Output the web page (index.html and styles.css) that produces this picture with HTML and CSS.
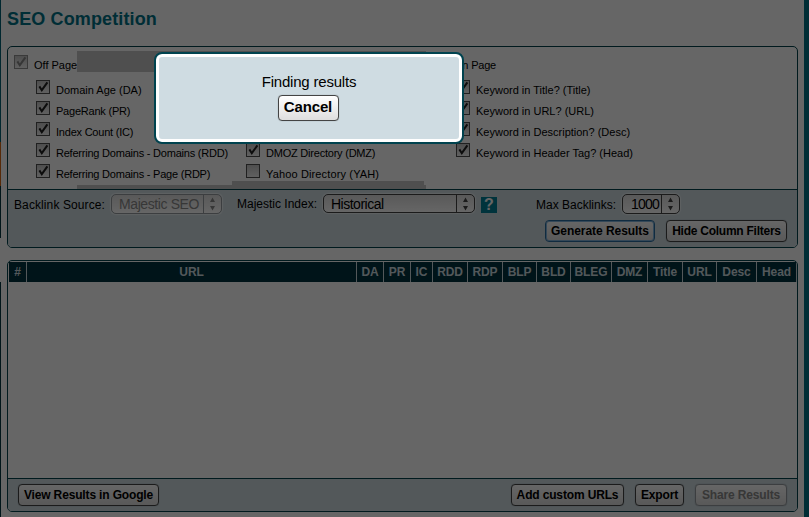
FILE: index.html
```html
<!DOCTYPE html>
<html lang="en">
<head>
    <meta charset="UTF-8">
    <meta name="viewport" content="width=device-width, initial-scale=1.0">
    <title>SEO Competition</title>
    <link rel="stylesheet" href="styles.css">
</head>
<body>
    <svg class="defs" width="0" height="0">
        <symbol id="tick" viewBox="0 0 14 14"><path d="M3.4 6.4 L5.8 10.2 L11.4 2.4" fill="none" stroke="currentColor" stroke-width="2"/></symbol>
        <symbol id="arrows" viewBox="0 0 7 14"><path d="M3.5 0.5 L6 5 H1 Z M3.5 13.5 L6 9 H1 Z" fill="currentColor"/></symbol>
    </svg>
    <div class="page">
        <div class="rail"><i class="teal"></i><i class="orange"></i><i class="dark"></i><i class="gap"></i><i class="dark low"></i></div>
        <main>
            <h1>SEO Competition</h1>
            <section class="panel filters">
                <div class="columns">
                    <div class="col first">
                        <label class="head off"><span class="box"><svg><use href="#tick"/></svg></span>Off Page</label>
                        <label><span class="box"><svg><use href="#tick"/></svg></span>Domain Age (DA)</label>
                        <label class="tight"><span class="box"><svg><use href="#tick"/></svg></span>PageRank (PR)</label>
                        <label class="tight"><span class="box"><svg><use href="#tick"/></svg></span>Index Count (IC)</label>
                        <label class="tight"><span class="box"><svg><use href="#tick"/></svg></span>Referring Domains - Domains (RDD)</label>
                        <label class="tight"><span class="box"><svg><use href="#tick"/></svg></span>Referring Domains - Page (RDP)</label>
                    </div>
                    <div class="col second">
                        <label class="tight"><span class="box"><svg><use href="#tick"/></svg></span>DMOZ Directory (DMZ)</label>
                        <label class="loose"><span class="box"></span>Yahoo Directory (YAH)</label>
                    </div>
                    <div class="col third">
                        <label class="head"><span class="box"><svg><use href="#tick"/></svg></span><span class="onpage">On Page</span></label>
                        <label><span class="box"><svg><use href="#tick"/></svg></span>Keyword in Title? (Title)</label>
                        <label><span class="box"><svg><use href="#tick"/></svg></span>Keyword in URL? (URL)</label>
                        <label><span class="box"><svg><use href="#tick"/></svg></span>Keyword in Description? (Desc)</label>
                        <label><span class="box"><svg><use href="#tick"/></svg></span>Keyword in Header Tag? (Head)</label>
                    </div>
                    <div class="patch top"></div>
                    <div class="patch bottom"></div>
                    <div class="patch bottom-right"></div>
                </div>
                <div class="options">
                    <div class="selects">
                        <span class="name source">Backlink Source:</span>
                        <div class="select disabled majestic"><span>Majestic SEO</span><svg><use href="#arrows"/></svg></div>
                        <span class="name index">Majestic Index:</span>
                        <div class="select historical"><span>Historical</span><svg><use href="#arrows"/></svg></div>
                        <span class="help">?</span>
                        <span class="name max">Max Backlinks:</span>
                        <div class="select count"><span>1000</span><svg><use href="#arrows"/></svg></div>
                    </div>
                    <div class="buttons">
                        <button class="focus generate">Generate Results</button>
                        <button class="hide">Hide Column Filters</button>
                    </div>
                </div>
            </section>
            <section class="panel results">
                <div class="thead">
                    <span>#</span><span>URL</span><span>DA</span><span>PR</span><span>IC</span><span>RDD</span><span>RDP</span><span>BLP</span><span>BLD</span><span>BLEG</span><span>DMZ</span><span>Title</span><span>URL</span><span>Desc</span><span>Head</span>
                </div>
                <div class="rows"></div>
                <div class="footer">
                    <button class="view">View Results in Google</button>
                    <button class="custom">Add custom URLs</button>
                    <button class="export">Export</button>
                    <button class="share" disabled>Share Results</button>
                </div>
            </section>
        </main>
        <div class="edge"></div>
    </div>
    <div class="overlay"></div>
    <div class="modal">
        <p>Finding results</p>
        <button class="cancel">Cancel</button>
    </div>
</body>
</html>
```
FILE: styles.css
```css
*{
    box-sizing: border-box;
}
body{
    margin: 0;
    width: 809px;
    height: 517px;
    overflow: hidden;
    background-color: #fff;
    color: #000;
    font-family: "Liberation Sans", Arial, sans-serif;
    font-size: 11px;
}
.defs{
    position: absolute;
}
.page{
    display: flex;
    height: 517px;
}
.rail{
    width: 1px;
    display: flex;
    flex-direction: column;
}
.rail .teal{
    height: 142px;
    background-color: #006277;
}
.rail .orange{
    height: 44px;
    background-color: #d86a16;
}
.rail .dark{
    height: 52px;
    background-color: #00353f;
}
.rail .gap{
    height: 44px;
}
.rail .low{
    flex: 1;
}
main{
    width: 803px;
    padding: 0 6px;
}
.edge{
    width: 5px;
    background-color: #007085;
}
h1{
    margin: 0;
    height: 46px;
    padding-top: 8px;
    font-size: 18px;
    letter-spacing: 0.13px;
    line-height: 22px;
    color: #007387;
}
.panel{
    width: 791px;
    border: 1px solid #00434d;
    border-radius: 5px;
    overflow: hidden;
}
.filters{
    height: 202px;
}
.columns{
    position: relative;
    display: flex;
    height: 142px;
    padding: 8px 0 0 6px;
}
.col{
    width: 210px;
    padding-left: 22px;
}
.second{
    padding-top: 88px;
}
.col label{
    display: flex;
    height: 21px;
    gap: 6px;
    line-height: 20px;
    white-space: nowrap;
}
.col .head{
    height: 25px;
    margin-left: -22px;
}
.col .tight{
    letter-spacing: -0.22px;
}
.col .loose{
    letter-spacing: 0.14px;
}
.onpage{
    letter-spacing: -0.2px;
}
.second label:first-child{
    height: 21px;
}
.second{
    padding-top: 88px;
}
.box{
    width: 14px;
    height: 14px;
    border: 1px solid #505050;
    background: linear-gradient(#c4c4c4, #f0f0f0);
    color: #222;
}
.box svg{
    display: block;
    width: 14px;
    height: 14px;
    margin: -1px;
}
.off .box{
    border-color: #929292;
    color: #888;
}
.patch{
    position: absolute;
    background-color: #c6c6c6;
}
.patch.top{
    left: 69px;
    top: 4px;
    width: 349px;
    height: 21px;
}
.patch.bottom{
    left: 69px;
    top: 138px;
    width: 349px;
    height: 4px;
}
.patch.bottom-right{
    left: 224px;
    top: 134px;
    width: 192px;
    height: 8px;
}
.options{
    height: 58px;
    border-top: 1px solid #00434d;
    background-color: #cfdce2;
}
.selects{
    display: flex;
    height: 30px;
    padding: 4px 0 0 6px;
    font-size: 12px;
}
.name{
    line-height: 20px;
    white-space: nowrap;
}
.source{
    width: 97px;
    padding-top: 1px;
    letter-spacing: 0.1px;
}
.index{
    width: 86px;
    margin-left: 15px;
}
.max{
    width: 86px;
    margin-left: 39px;
    padding-top: 1px;
}
.select{
    display: flex;
    height: 20px;
    border: 1px solid #444;
    border-radius: 5px;
    background: linear-gradient(#dedede, #fff);
    box-shadow: 0 0 1px 1px rgba(255,255,255,0.6);
    font-size: 14px;
    letter-spacing: -0.4px;
    line-height: 18px;
}
.select span{
    flex: 1;
    padding-left: 7px;
    border-right: 1px solid #444;
    white-space: nowrap;
}
.select svg{
    width: 7px;
    height: 14px;
    margin: 2px 5px;
    color: #444;
}
.historical{
    width: 152px;
    height: 19px;
    letter-spacing: -0.5px;
}
.count{
    width: 58px;
    letter-spacing: -0.8px;
}
.count span{
    padding-left: 8px;
}
.disabled{
    border-color: #969ca0;
    color: #8b8b8b;
}
.disabled span{
    border-color: #969ca0;
}
.disabled svg{
    color: #888;
}
.majestic{
    width: 111px;
}
.help{
    width: 16px;
    height: 16px;
    margin: 3px 0 0 6px;
    background-color: #007f96;
    color: #fff;
    font-size: 16px;
    font-weight: bold;
    line-height: 16px;
    text-align: center;
}
button{
    height: 22px;
    padding: 0;
    border: 1px solid #444;
    border-radius: 4px;
    background: linear-gradient(#fff, #dedede);
    box-shadow: 0 0 1px rgba(0,0,0,0.4);
    color: #000;
    font-family: inherit;
    font-size: 12px;
    font-weight: bold;
    letter-spacing: -0.15px;
    line-height: 18px;
    white-space: nowrap;
}
.buttons{
    display: flex;
    justify-content: flex-end;
    gap: 11px;
    padding-right: 10px;
}
.generate{
    width: 110px;
    letter-spacing: -0.05px;
}
.focus{
    border-color: #2a6da0;
    box-shadow: inset 0 0 0 1px #83b5dc;
}
.hide{
    width: 121px;
    letter-spacing: -0.25px;
}
.results{
    height: 252px;
    margin-top: 12px;
    display: flex;
    flex-direction: column;
}
.thead{
    display: grid;
    grid-template-columns: 18px 330px 27px 27px 22px 35px 35px 34px 34px 41px 36px 35px 34px 40px 40px;
    height: 21px;
    padding: 1px 0 1px 1px;
    color: #cfdce2;
    font-size: 12px;
    font-weight: bold;
    letter-spacing: -0.1px;
    line-height: 20px;
    text-align: center;
}
.thead span{
    background-color: #00343f;
    border-right: 1px solid #cfdce2;
}
.rows{
    flex: 1;
}
.footer{
    display: flex;
    height: 33px;
    padding: 5px 10px;
    border-top: 1px solid #00434d;
    background-color: #cfdce2;
}
.view{
    width: 141px;
}
.custom{
    width: 113px;
    margin-left: auto;
}
.export{
    width: 49px;
    margin-left: 11px;
}
.share{
    width: 92px;
    margin-left: 11px;
    border-color: #969ca0;
    color: #8b8b8b;
}
.overlay{
    position: fixed;
    top: 0;
    left: 0;
    width: 100%;
    height: 100%;
    background-color: rgba(0, 0, 0, 0.6);
}
.modal{
    position: absolute;
    left: 154px;
    top: 52px;
    width: 310px;
    height: 92px;
    border: 2px solid #00434f;
    border-radius: 8px;
    background-color: #cfdce2;
    box-shadow: inset 0 0 0 3px #fff;
    display: flex;
    flex-direction: column;
    align-items: center;
}
.modal p{
    margin: 19px 0 4px;
    font-size: 15px;
    letter-spacing: -0.2px;
    line-height: 18px;
}
.cancel{
    width: 61px;
    height: 26px;
    margin-right: 2px;
    padding-bottom: 2px;
    font-size: 15px;
    line-height: 22px;
}
```
